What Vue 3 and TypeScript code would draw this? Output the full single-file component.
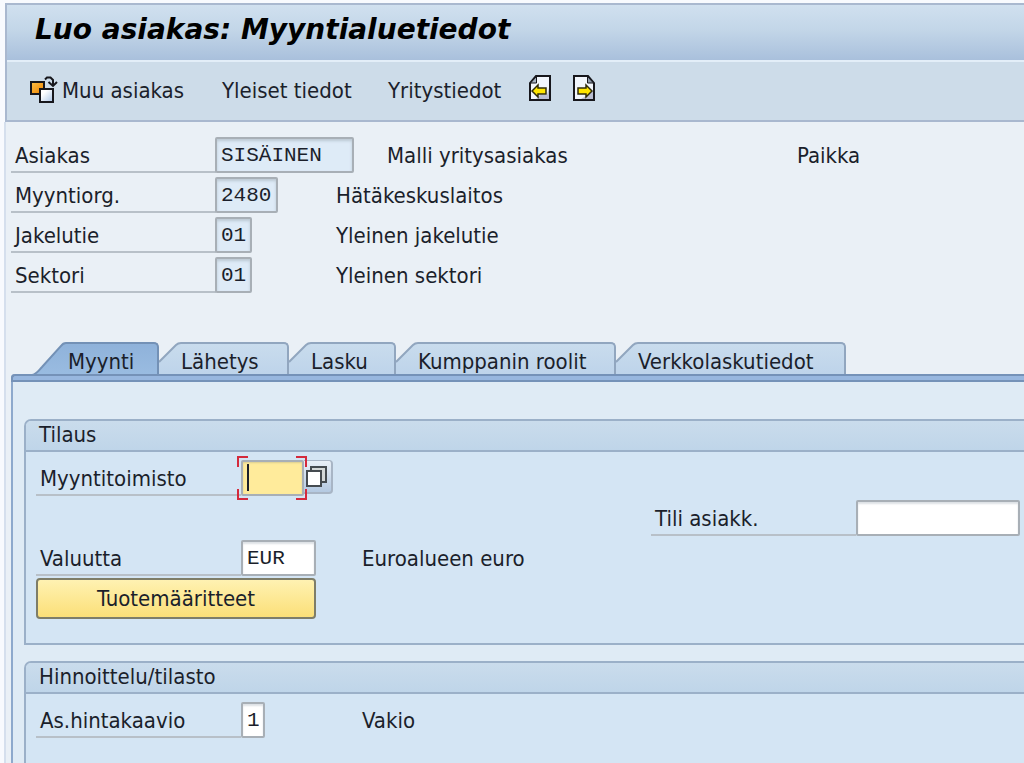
<script setup lang="ts">
import { ref } from 'vue'

interface KeyField {
  id: string
  label: string
  value: string
  size: string
  text: string
  extra?: string
}

const keyFields: KeyField[] = [
  { id: 'customer', label: 'Asiakas', value: 'SISÄINEN', size: 'w-long', text: 'Malli yritysasiakas', extra: 'Paikka' },
  { id: 'sales-org', label: 'Myyntiorg.', value: '2480', size: 'w-four', text: 'Hätäkeskuslaitos' },
  { id: 'channel', label: 'Jakelutie', value: '01', size: 'w-two', text: 'Yleinen jakelutie' },
  { id: 'division', label: 'Sektori', value: '01', size: 'w-two', text: 'Yleinen sektori' },
]

const tabs = ['Myynti', 'Lähetys', 'Lasku', 'Kumppanin roolit', 'Verkkolaskutiedot']
const activeTab = ref(0)

const office = ref('')
const account = ref('')
const currency = ref('EUR')
const pricing = ref('1')
</script>

<template>
  <div class="window">
    <header class="head">
      <h1 class="title">Luo asiakas: Myyntialuetiedot</h1>
      <nav class="toolbar" aria-label="Toiminnot">
        <button type="button" class="tool other">
          <svg width="30" height="30" viewBox="0 0 30 30" aria-hidden="true">
            <defs>
              <linearGradient id="orange" x1="0" y1="0" x2="1" y2="1">
                <stop offset="0" stop-color="#ffc247" />
                <stop offset="1" stop-color="#ec8200" />
              </linearGradient>
              <linearGradient id="pale" x1="0" y1="0" x2="1" y2="1">
                <stop offset="0.3" stop-color="#ffffff" />
                <stop offset="1" stop-color="#a9c4e6" />
              </linearGradient>
              <linearGradient id="tab-idle" x1="0" y1="0" x2="0" y2="1">
                <stop offset="0" stop-color="#c9dced" />
                <stop offset="1" stop-color="#bdd3ea" />
              </linearGradient>
              <linearGradient id="tab-active" x1="0" y1="0" x2="0" y2="1">
                <stop offset="0" stop-color="#8fb2da" />
                <stop offset="1" stop-color="#9abce1" />
              </linearGradient>
            </defs>
            <rect x="2" y="8" width="13" height="12" fill="url(#orange)" stroke="#17171c" stroke-width="2" />
            <rect x="11" y="15" width="13" height="13" fill="url(#pale)" stroke="#17171c" stroke-width="2" />
            <path d="M16 5.500l2-2h3.500l2.500 2.500v5M19.500 8l4.500 4 4-4" fill="none" stroke="#17171c" stroke-width="2" />
          </svg>
          <span>Muu asiakas</span>
        </button>
        <button type="button" class="tool general">Yleiset tiedot</button>
        <button type="button" class="tool company">Yritystiedot</button>
        <button type="button" class="tool page-nav" aria-label="Edellinen">
          <svg width="24" height="28" viewBox="0 0 24 28" aria-hidden="true">
            <path d="M8 2h14v24H2V9z" fill="#f2f6fc" stroke="#17171c" stroke-width="2" />
            <path d="M21 14v11H8l4-4h7z" fill="#b9bdd2" />
            <path d="M8.500 2.500V9H2.500z" fill="#a9b5c4" stroke="#17171c" stroke-width="1" />
            <path d="M4 17l6-6v3h8v6h-8v3z" fill="#ffe600" stroke="#302c08" stroke-width="1.500" />
          </svg>
        </button>
        <button type="button" class="tool page-nav" aria-label="Seuraava">
          <svg width="24" height="28" viewBox="0 0 24 28" aria-hidden="true">
            <path d="M2 2h14l6 7v17H2z" fill="#f2f6fc" stroke="#17171c" stroke-width="2" />
            <path d="M21 17v8H9l5-3z" fill="#b9bdd2" />
            <path d="M15.500 2.500V9h6z" fill="#8f9bab" stroke="#17171c" stroke-width="1" />
            <path d="M20 17l-6-6v3H6v6h8v3z" fill="#ffe600" stroke="#302c08" stroke-width="1.500" />
          </svg>
        </button>
      </nav>
    </header>

    <main class="content">
      <section class="keys">
        <div v-for="f in keyFields" :key="f.id" class="key-row" :class="{ wide: f.extra }">
          <label class="label" :for="f.id">{{ f.label }}</label>
          <div><input :id="f.id" class="field locked" :class="f.size" :value="f.value" readonly /></div>
          <span class="text">{{ f.text }}</span>
          <span v-if="f.extra" class="text">{{ f.extra }}</span>
        </div>
      </section>

      <div class="tabs" role="tablist">
        <button
          v-for="(tab, i) in tabs"
          :key="tab"
          type="button"
          role="tab"
          class="tab"
          :class="{ active: i === activeTab }"
          :aria-selected="i === activeTab"
          @click="activeTab = i"
        >
          <svg v-if="i === 0" class="slant" width="34" height="34" viewBox="0 0 34 34" aria-hidden="true">
            <path class="slant-fill" d="M0 34C5 32 7 28 10 25L29 4Q31 1 34 1V34z" />
            <path class="slant-line" d="M0 33C5 32 7 28 10 25L29 4Q31 1 34 1" />
          </svg>
          <svg v-else class="slant" width="22" height="34" viewBox="0 0 22 34" aria-hidden="true">
            <path class="slant-fill" d="M0 34V20L17 3Q19 1 22 1V34z" />
            <path class="slant-line" d="M0 20L17 3Q19 1 22 1" />
          </svg>
          <span class="tab-face">{{ tab }}</span>
        </button>
      </div>

      <div class="panel" role="tabpanel">
        <section class="group">
          <h2 class="group-title">Tilaus</h2>
          <div class="group-body order">
            <div class="row">
              <label class="label" for="office">Myyntitoimisto</label>
              <div class="focus">
                <input id="office" v-model="office" class="field current" />
                <svg class="corners" width="70" height="44" viewBox="0 0 70 44" aria-hidden="true">
                  <path d="M1 11V1H11M59 1H69V11M69 33V43H59M11 43H1V33" fill="none" stroke="#d42a3c" stroke-width="2" />
                </svg>
              </div>
              <button type="button" class="help" aria-label="Arvoluettelo">
                <svg width="24" height="24" viewBox="0 0 24 24" aria-hidden="true">
                  <path d="M7 7V2H22V17H17" fill="#d4d8d8" stroke="#454b50" stroke-width="2" />
                  <rect x="3" y="6" width="14" height="15" fill="#ffffff" stroke="#454b50" stroke-width="2" />
                </svg>
              </button>
            </div>
            <div class="row account">
              <label class="label" for="account">Tili asiakk.</label>
              <input id="account" v-model="account" class="field w-account" />
            </div>
            <div class="row">
              <label class="label" for="currency">Valuutta</label>
              <div class="slot"><input id="currency" v-model="currency" class="field w-currency" /></div>
              <span class="text">Euroalueen euro</span>
            </div>
            <button type="button" class="attributes">Tuotemääritteet</button>
          </div>
        </section>

        <section class="group">
          <h2 class="group-title">Hinnoittelu/tilasto</h2>
          <div class="group-body">
            <div class="row">
              <label class="label" for="pricing">As.hintakaavio</label>
              <div class="slot"><input id="pricing" v-model="pricing" class="field w-one" /></div>
              <span class="text">Vakio</span>
            </div>
          </div>
        </section>
      </div>
    </main>
  </div>
</template>

<style>
body {
  margin: 0;
  background: #f8fafe;
}
</style>

<style scoped>
.window,
.window * {
  box-sizing: border-box;
}
.window {
  display: flex;
  flex-direction: column;
  min-height: 100vh;
  padding: 3px 0 0 4px;
  overflow: hidden;
  color: #1b1f2b;
  font: 22px/28px "DejaVu Sans Condensed", "DejaVu Sans", Tahoma, sans-serif;
  white-space: nowrap;
}
button {
  margin: 0;
  padding: 0;
  border: 0;
  background: none;
  color: inherit;
  font: inherit;
}
.head {
  flex: none;
  border: 2px solid #a9b8cf;
  border-right: 0;
  margin-left: 1px;
  background: #cddce9;
}
.title {
  height: 57px;
  margin: 0;
  padding: 0 28px;
  border-bottom: 2px solid #e3eef8;
  background: linear-gradient(#d0e0ef, #c3d6e8 45%, #a9c0dc);
  color: #000;
  font: italic bold 28px/50px "DejaVu Sans", Verdana, sans-serif;
}
.toolbar {
  display: flex;
  align-items: center;
  height: 58px;
  padding: 0 22px;
}
.tool {
  display: flex;
  align-items: center;
  gap: 3px;
}
.other { width: 193px; }
.other svg { margin-top: -4px; }
.general { width: 166px; }
.company { width: 140px; }
.page-nav {
  width: 44px;
  padding-bottom: 6px;
}
.content {
  flex: 1;
  display: flex;
  flex-direction: column;
  padding: 15px 0 0 5px;
  border-left: 2px solid #d5dfed;
  background: #eaf0f6;
}
.keys {
  display: grid;
  gap: 4px;
  margin-bottom: 49px;
}
.key-row {
  display: grid;
  grid-template-columns: 204px 121px 1fr;
  height: 36px;
}
.key-row.wide {
  grid-template-columns: 204px 172px 410px 1fr;
}
.label {
  flex: none;
  width: 205px;
  height: 36px;
  padding-left: 4px;
  border-bottom: 2px solid #b8c0c8;
  line-height: 38px;
}
.text {
  line-height: 38px;
}
.field {
  display: block;
  height: 36px;
  margin: 0;
  padding: 0 4px;
  border: 2px solid #a8afb6;
  border-radius: 2px;
  outline: 0;
  background: #fff;
  box-shadow: inset 0 2px 2px #dde1e5;
  color: #1b1f2b;
  font: 21px/28px "Liberation Mono", monospace;
}
.locked {
  background: #deebf7;
  box-shadow: inset 0 2px 3px #bcc8d3;
}
.w-long { width: 139px; }
.w-four { width: 63px; }
.w-two { width: 37px; }
.w-one { width: 24px; }
.w-currency { width: 75px; }
.w-account { width: 164px; }

.tabs {
  display: grid;
  grid-template-columns: 127px 130px 107px 220px 230px;
  height: 32px;
  padding-left: 21px;
}
.tab {
  display: flex;
  height: 34px;
  text-align: left;
}
.slant {
  flex: none;
}
.slant-fill { fill: url(#tab-idle); }
.slant-line {
  fill: none;
  stroke: #91a6bf;
  stroke-width: 2;
}
.tab-face {
  flex: 1;
  height: 34px;
  border: solid #91a6bf;
  border-width: 2px 2px 0 0;
  border-radius: 0 5px 0 0;
  background: linear-gradient(#c9dced, #bdd3ea);
  line-height: 36px;
}
.active .slant-fill { fill: url(#tab-active); }
.active .slant-line { stroke: #7391b6; }
.active .tab-face {
  border-color: #7391b6;
  background: linear-gradient(#8fb2da, #9abce1);
  padding-left: 2px;
}
.panel {
  position: relative;
  flex: 1;
  display: flex;
  flex-direction: column;
  gap: 16px;
  padding: 0 0 0 11px;
  border-left: 2px solid #8ea9cc;
  border-radius: 4px 0 0 0;
  background: #dfebf5;
}
.panel::before {
  content: "";
  box-sizing: border-box;
  height: 8px;
  margin: 0 0 21px -13px;
  border: 2px solid #7592b8;
  border-width: 2px 0 2px 2px;
  border-radius: 4px 0 0 0;
  background: #98b7df;
}
.group {
  border: 2px solid #9bb0c8;
  border-right: 0;
  border-radius: 7px 0 0 0;
  background: #d4e5f4;
}
.group:last-child {
  flex: 1;
  border-bottom: 0;
}
.group-title {
  height: 31px;
  margin: 0;
  padding-left: 13px;
  border-bottom: 2px solid #9bb0c8;
  border-radius: 5px 0 0 0;
  background: linear-gradient(#cadcec, #bfd5e9);
  font: inherit;
}
.group-body {
  display: flex;
  flex-direction: column;
  padding: 8px 0 0 10px;
}
.order {
  gap: 4px;
  padding-bottom: 24px;
}
.row {
  display: flex;
  height: 36px;
}
.slot {
  width: 121px;
}
.account {
  padding-left: 615px;
}
.focus {
  position: relative;
  width: 63px;
}
.corners {
  position: absolute;
  top: -4px;
  left: -4px;
}
.current {
  width: 63px;
  background: linear-gradient(#1b1f2b, #1b1f2b) 4px 2px / 2px 27px no-repeat, #ffeb9b;
  box-shadow: inset 0 1px 2px #d9cc92;
}
.help {
  display: flex;
  align-items: center;
  width: 29px;
  height: 34px;
  border: solid #a8b5c5;
  border-width: 1px 2px 2px 0;
  border-radius: 0 4px 4px 0;
  background: linear-gradient(#e8eff7, #b4c9e1);
}
.attributes {
  width: 280px;
  height: 41px;
  margin-top: -2px;
  border: 2px solid #7e7d68;
  border-radius: 4px;
  background: linear-gradient(#fff2b2, #fbdf78);
}
</style>
